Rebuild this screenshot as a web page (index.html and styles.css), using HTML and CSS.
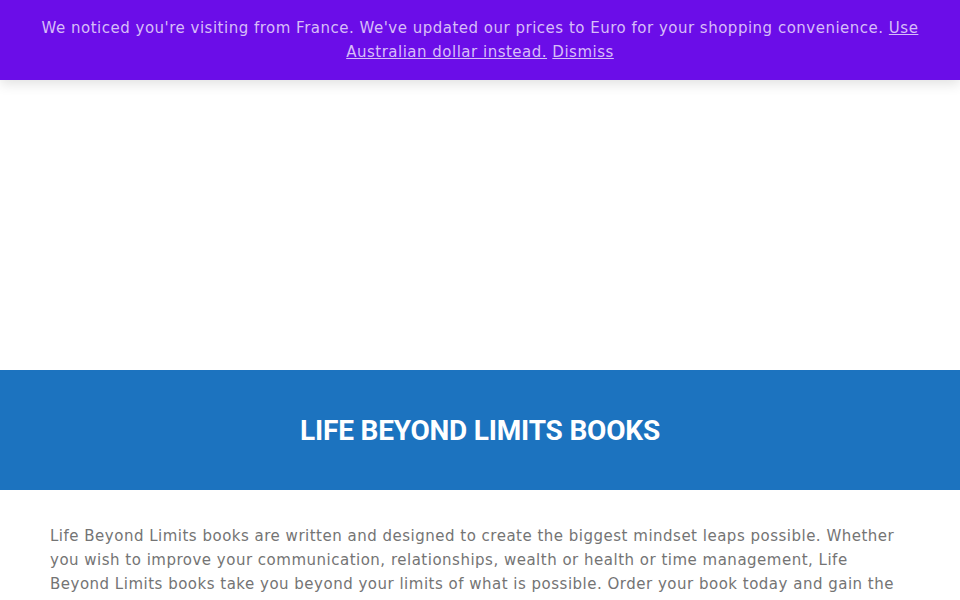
FILE: index.html
```html
<!DOCTYPE html>
<html lang="en">
<head>
<meta charset="utf-8">
<title>Life Beyond Limits Books</title>
<link rel="stylesheet" href="styles.css">
</head>
<body>
<div class="notice">
  <p class="notice-text">We noticed you're visiting from France. We've updated our prices to Euro for your shopping convenience. <a href="#">Use Australian dollar instead.</a> <a href="#">Dismiss</a></p>
</div>
<div class="hero"></div>
<section class="band">
  <h1 class="band-title">LIFE BEYOND LIMITS BOOKS</h1>
</section>
<section class="intro">
  <p class="intro-text">Life Beyond Limits books are written and designed to create the biggest mindset leaps possible. Whether you wish to improve your communication, relationships, wealth or health or time management, Life Beyond Limits books take you beyond your limits of what is possible. Order your book today and gain the knowledge you need to create the life you truly desire.</p>
</section>
</body>
</html>
```
FILE: styles.css
```css
html, body {
  margin: 0;
  padding: 0;
  background: #ffffff;
}
body {
  font-family: "DejaVu Sans", sans-serif;
  overflow: hidden;
}
.notice {
  position: relative;
  z-index: 2;
  background: #6b0de8;
  padding: 16px 40px;
  box-shadow: 0 4px 12px rgba(0, 0, 0, 0.12);
}
.notice-text {
  margin: 0;
  text-align: center;
  font-size: 15px;
  font-weight: 400;
  line-height: 24px;
  letter-spacing: 0.5px;
  color: #d7bdf8;
}
.notice-text a {
  color: #d7bdf8;
  text-decoration: underline;
}
.hero {
  height: 290px;
  background: #ffffff;
}
.band {
  background: #1c73bf;
  height: 120px;
  display: flex;
  align-items: center;
  justify-content: center;
}
.band-title {
  margin: 0;
  font-family: Roboto, "Liberation Sans", sans-serif;
  font-weight: 700;
  font-size: 28px;
  color: #ffffff;
  letter-spacing: -0.2px;
}
.intro {
  padding: 34px 50px 0;
}
.intro-text {
  margin: 0;
  font-size: 15px;
  font-weight: 400;
  line-height: 24px;
  letter-spacing: 0.5px;
  color: #747474;
}
```
